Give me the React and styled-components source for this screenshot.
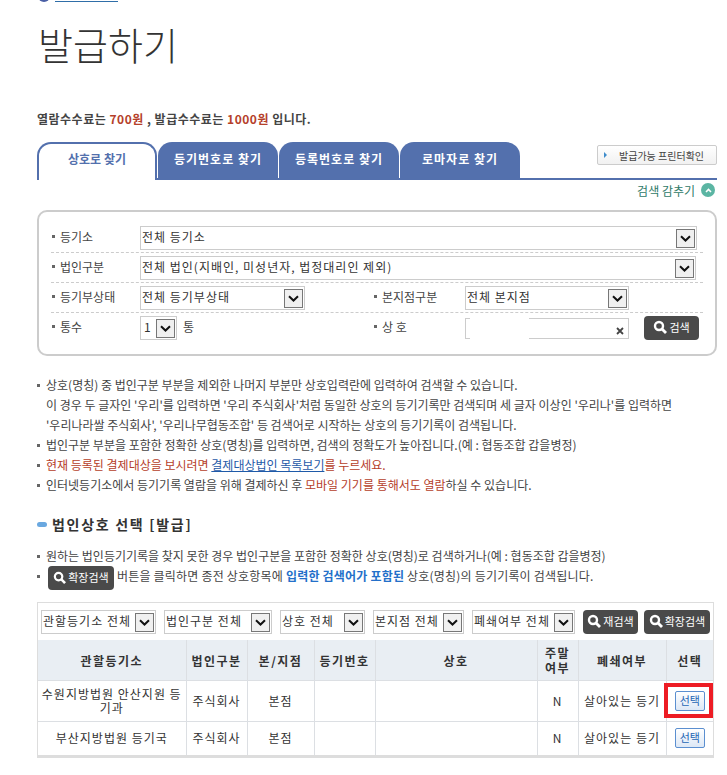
import React from "react";
import styled, { createGlobalStyle } from "styled-components";

const FONT = `"Noto Sans CJK KR", "Noto Sans", sans-serif`;

const GlobalStyle = createGlobalStyle`
  html, body {
    margin: 0;
    padding: 0;
    background: #fff;
  }
  body {
    font-family: ${FONT};
    font-size: 12px;
    color: #444;
  }
`;

const Chevron = () => (
  <svg width="11" height="7" viewBox="0 0 11 7">
    <path d="M1 1.2 L5.5 5.5 L10 1.2" fill="none" stroke="#111" strokeWidth="2" />
  </svg>
);

const SearchIcon = ({ size = 14 }) => (
  <svg width={size} height={size} viewBox="0 0 14 14">
    <circle cx="6" cy="6" r="4" fill="none" stroke="#fff" strokeWidth="2.4" />
    <path d="M9 9 L13 13" stroke="#fff" strokeWidth="2.8" />
  </svg>
);

const Select = ({ width, children, compact }) => (
  <SelectBox $width={width} $compact={compact}>
    <SelectText>{children}</SelectText>
    <SelectArrow>
      <Chevron />
    </SelectArrow>
  </SelectBox>
);

const App = () => (
  <Page>
    <GlobalStyle />
    <TopCrumb>
      <CrumbDot />
      <CrumbLine />
    </TopCrumb>
    <Title>발급하기</Title>
    <FeeNotice>
      열람수수료는 <Fee>700원</Fee> , 발급수수료는 <Fee>1000원</Fee> 입니다.
    </FeeNotice>

    <TabRow>
      <Tab $active>상호로 찾기</Tab>
      <Tab>등기번호로 찾기</Tab>
      <Tab>등록번호로 찾기</Tab>
      <Tab>로마자로 찾기</Tab>
      <PrinterButton>
        <PrinterMark />
        발급가능 프린터확인
      </PrinterButton>
    </TabRow>

    <HideRow>
      검색 감추기
      <HideIcon>
        <svg width="7" height="5" viewBox="0 0 7 5">
          <path d="M1 4 L3.5 1.5 L6 4" fill="none" stroke="#fff" strokeWidth="1.6" />
        </svg>
      </HideIcon>
    </HideRow>

    <SearchPanel>
      <FormRow>
        <Label>등기소</Label>
        <Select width="557px">전체 등기소</Select>
      </FormRow>
      <FormRow>
        <Label>법인구분</Label>
        <Select width="556px">전체 법인(지배인, 미성년자, 법정대리인 제외)</Select>
      </FormRow>
      <FormRow>
        <Label>등기부상태</Label>
        <Select width="165px">전체 등기부상태</Select>
        <SecondLabel>본지점구분</SecondLabel>
        <Select width="164px">전체 본지점</Select>
      </FormRow>
      <FormRow $last>
        <Label>통수</Label>
        <Select width="37px" compact>1</Select>
        <Unit>통</Unit>
        <SecondLabel $narrow>상 호</SecondLabel>
        <NameInput>
          <InputPatch />
          <ClearMark>
            <svg width="8" height="8" viewBox="0 0 8 8">
              <path d="M1 1 L7 7 M7 1 L1 7" fill="none" stroke="#444" strokeWidth="1.8" />
            </svg>
          </ClearMark>
        </NameInput>
        <DarkButton $width="55px" $left="15px">
          <SearchIcon />
          검색
        </DarkButton>
      </FormRow>
    </SearchPanel>

    <NoteList>
      <Note>
        상호(명칭) 중 법인구분 부분을 제외한 나머지 부분만 상호입력란에 입력하여 검색할 수 있습니다.
        <br />
        이 경우 두 글자인 '우리'를 입력하면 '우리 주식회사'처럼 동일한 상호의 등기기록만 검색되며 세 글자 이상인 '우리나'를 입력하면
        <br />
        '우리나라쌀 주식회사', '우리나무협동조합' 등 검색어로 시작하는 상호의 등기기록이 검색됩니다.
      </Note>
      <Note>법인구분 부분을 포함한 정확한 상호(명칭)를 입력하면, 검색의 정확도가 높아집니다.(예 : 협동조합 갑을병정)</Note>
      <Note>
        <Red>현재 등록된 결제대상을 보시려면 </Red>
        <BlueLink>결제대상법인 목록보기</BlueLink>
        <Red>를 누르세요.</Red>
      </Note>
      <Note>
        인터넷등기소에서 등기기록 열람을 위해 결제하신 후 <Red>모바일 기기를 통해서도 열람</Red>하실 수 있습니다.
      </Note>
    </NoteList>

    <SectionTitle>
      <SectionMark />
      법인상호 선택 [발급]
    </SectionTitle>

    <SubNotes>
      <Note>원하는 법인등기기록을 찾지 못한 경우 법인구분을 포함한 정확한 상호(명칭)로 검색하거나(예 : 협동조합 갑을병정)</Note>
      <Note $tall>
        <DarkButton $width="66px" $left="2px" $inline>
          <SearchIcon size={13} />
          확장검색
        </DarkButton>
        버튼을 클릭하면 종전 상호항목에 <BlueStrong>입력한 검색어가 포함된</BlueStrong> 상호(명칭)의 등기기록이 검색됩니다.
      </Note>
    </SubNotes>

    <ResultBox>
      <FilterBar>
        <Select width="115px">관할등기소 전체</Select>
        <Select width="108px">법인구분 전체</Select>
        <Select width="85px">상호 전체</Select>
        <Select width="91px">본지점 전체</Select>
        <Select width="103px">폐쇄여부 전체</Select>
        <DarkButton $width="55px">
          <SearchIcon />
          재검색
        </DarkButton>
        <DarkButton $width="66px" $left="-2px">
          <SearchIcon />
          확장검색
        </DarkButton>
      </FilterBar>
      <ResultTable>
        <colgroup>
          <col width="148" />
          <col width="61" />
          <col width="67" />
          <col width="61" />
          <col width="162" />
          <col width="41" />
          <col width="88" />
          <col width="47" />
        </colgroup>
        <thead>
          <tr>
            <Th>관할등기소</Th>
            <Th>법인구분</Th>
            <Th>본/지점</Th>
            <Th>등기번호</Th>
            <Th>상호</Th>
            <Th>
              주말
              <br />
              여부
            </Th>
            <Th>폐쇄여부</Th>
            <Th>선택</Th>
          </tr>
        </thead>
        <tbody>
          <RowA>
            <Td>수원지방법원 안산지원 등기과</Td>
            <Td>주식회사</Td>
            <Td>본점</Td>
            <Td />
            <Td />
            <Td>N</Td>
            <Td>살아있는 등기</Td>
            <Td $marked>
              <Highlight />
              <PickButton>선택</PickButton>
            </Td>
          </RowA>
          <RowB>
            <Td>부산지방법원 등기국</Td>
            <Td>주식회사</Td>
            <Td>본점</Td>
            <Td />
            <Td />
            <Td>N</Td>
            <Td>살아있는 등기</Td>
            <Td>
              <PickButton>선택</PickButton>
            </Td>
          </RowB>
        </tbody>
      </ResultTable>
    </ResultBox>
  </Page>
);

export default App;

const Page = styled.div`
  width: 727px;
  height: 775px;
  overflow: hidden;
  box-sizing: border-box;
  padding-left: 37px;
`;

const TopCrumb = styled.div`
  display: flex;
  align-items: flex-end;
  height: 2px;
  overflow: hidden;
  gap: 5px;
`;
const CrumbDot = styled.span`
  width: 12px;
  height: 12px;
  border-radius: 50%;
  background: #4a5fa5;
  margin-left: 1px;
`;
const CrumbLine = styled.span`
  width: 63px;
  height: 1px;
  background: #2f6ea8;
`;

const Title = styled.h1`
  margin: 19px 0 0 1px;
  font-size: 38px;
  line-height: 46px;
  font-weight: 300;
  color: #333;
`;

const FeeNotice = styled.p`
  margin: 42px 0 0;
  font-size: 12px;
  line-height: 20px;
  font-weight: 700;
  color: #444;
  letter-spacing: 0.5px;
`;
const Fee = styled.span`
  color: #b5402a;
`;

const TabRow = styled.div`
  display: flex;
  gap: 1px;
  width: 680px;
  height: 36px;
  margin-top: 13px;
  border-bottom: 2px solid #5370ad;
  position: relative;
`;
const Tab = styled.div`
  box-sizing: border-box;
  width: 120px;
  height: ${(p) => (p.$active ? "38px" : "36px")};
  padding-top: ${(p) => (p.$active ? "5px" : "7px")};
  text-align: center;
  font-size: 12px;
  line-height: 20px;
  font-weight: 700;
  letter-spacing: ${(p) => (p.$active ? "0" : "1px")};
  border-radius: 14px 14px 0 0;
  color: ${(p) => (p.$active ? "#5370ad" : "#fff")};
  background: ${(p) => (p.$active ? "#fff" : "#5370ad")};
  border: ${(p) => (p.$active ? "2px solid #5370ad" : "none")};
  border-bottom: none;
  z-index: 1;
`;
const PrinterButton = styled.div`
  position: absolute;
  right: 0;
  top: 3px;
  box-sizing: border-box;
  width: 120px;
  height: 20px;
  display: flex;
  align-items: center;
  border: 1px solid #ccc;
  border-radius: 2px;
  background: linear-gradient(#fff, #f1f1f1);
  font-size: 10px;
  color: #444;
  white-space: nowrap;
`;
const PrinterMark = styled.span`
  width: 0;
  height: 0;
  margin: 0 12px 0 6px;
  border-left: 3px solid #3f8ccb;
  border-top: 3px solid transparent;
  border-bottom: 3px solid transparent;
`;

const HideRow = styled.div`
  display: flex;
  justify-content: flex-end;
  align-items: center;
  gap: 6px;
  width: 678px;
  height: 20px;
  font-size: 12px;
  color: #2f7a68;
`;
const HideIcon = styled.span`
  display: flex;
  align-items: center;
  justify-content: center;
  width: 14px;
  height: 14px;
  border-radius: 50%;
  background: #5bb5a3;
`;

const SearchPanel = styled.div`
  box-sizing: border-box;
  width: 680px;
  height: 146px;
  margin-top: 10px;
  padding: 14px 12px 0;
  border: 2px solid #ccc;
  border-radius: 10px;
`;
const FormRow = styled.div`
  display: flex;
  align-items: flex-start;
  height: 26px;
  margin-bottom: 3px;
  border-bottom: ${(p) => (p.$last ? "none" : "1px dashed #ccc")};
`;
const Label = styled.div`
  display: flex;
  align-items: center;
  width: 89px;
  height: 21px;
  font-size: 12px;
  color: #444;
  &::before {
    content: "";
    width: 3px;
    height: 3px;
    margin: 0 5px 0 1px;
    background: #666;
  }
`;
const SecondLabel = styled(Label)`
  width: 91px;
  margin-left: ${(p) => (p.$narrow ? "0" : "69px")};
  &::before {
    margin-left: 0;
  }
`;
const Unit = styled.span`
  width: 191px;
  margin-left: 6px;
  line-height: 22px;
`;

const SelectBox = styled.div`
  box-sizing: border-box;
  flex: none;
  display: flex;
  justify-content: space-between;
  width: ${(p) => p.$width};
  height: 24px;
  padding: 0 0 0 ${(p) => (p.$compact ? "3px" : "1px")};
  border: 1px solid #ccc;
  font-size: 12px;
  line-height: 20px;
  letter-spacing: 1px;
  color: #333;
  background: #fff;
`;
const SelectText = styled.span`
  white-space: nowrap;
`;
const SelectArrow = styled.span`
  flex: none;
  box-sizing: border-box;
  display: flex;
  align-items: center;
  justify-content: center;
  width: 19px;
  height: 19px;
  margin: 2px 1px 0 0;
  border: 1px solid #777;
  background: #f0f0f0;
`;

const NameInput = styled.div`
  position: relative;
  box-sizing: border-box;
  width: 164px;
  height: 21px;
  margin-top: 2px;
  border: 1px solid #ccc;
`;
const InputPatch = styled.span`
  position: absolute;
  left: 4px;
  top: -1px;
  bottom: -1px;
  width: 59px;
  background: #fff;
`;
const ClearMark = styled.span`
  position: absolute;
  right: 4px;
  top: 8px;
  display: flex;
`;

const DarkButton = styled.div`
  box-sizing: border-box;
  flex: none;
  display: ${(p) => (p.$inline ? "inline-flex" : "flex")};
  align-items: center;
  justify-content: center;
  gap: 2px;
  width: ${(p) => p.$width};
  height: 24px;
  margin-left: ${(p) => p.$left || "0"};
  margin-right: ${(p) => (p.$inline ? "3px" : "0")};
  vertical-align: top;
  padding-bottom: 2px;
  background: #4a4a4a;
  border-radius: 4px;
  color: #fff;
  font-size: 11px;
  letter-spacing: 0;
  white-space: nowrap;
`;

const NoteList = styled.ul`
  list-style: none;
  margin: 19px 0 0;
  padding: 0;
`;
const SubNotes = styled(NoteList)`
  margin-top: 12px;
`;
const Note = styled.li`
  position: relative;
  padding-left: 9px;
  font-size: 12px;
  line-height: 20px;
  height: ${(p) => (p.$tall ? "24px" : "auto")};
  letter-spacing: ${(p) => (p.$tall ? "0.2px" : "0")};
  color: #444;
  white-space: nowrap;
  &::before {
    content: "";
    position: absolute;
    left: 0;
    top: 9px;
    width: 3px;
    height: 3px;
    background: #666;
  }
`;
const Red = styled.span`
  color: #b5402a;
`;
const BlueLink = styled.a`
  color: #1f5aa8;
  text-decoration: underline;
`;
const BlueStrong = styled.strong`
  color: #2470c9;
`;

const SectionTitle = styled.h2`
  display: flex;
  align-items: center;
  gap: 5px;
  margin: 19px 0 1px;
  font-size: 14px;
  line-height: 20px;
  font-weight: 700;
  color: #333;
  letter-spacing: 1.7px;
`;
const SectionMark = styled.span`
  width: 10px;
  height: 5px;
  border-radius: 3px;
  background: #6aa8e0;
`;

const ResultBox = styled.div`
  box-sizing: border-box;
  width: 677px;
  margin-top: 12px;
  border: 1px solid #ddd;
`;
const FilterBar = styled.div`
  display: flex;
  align-items: flex-start;
  gap: 8px;
  height: 37px;
  padding: 7px 0 0 3px;
  box-sizing: border-box;
`;
const ResultTable = styled.table`
  width: 100%;
  table-layout: fixed;
  border-collapse: collapse;
  border-bottom: 2px solid #ddd;
`;
const Th = styled.th`
  height: 40px;
  padding: 0;
  background: #e9eef3;
  border: 1px solid #dcdfe3;
  border-top: none;
  font-size: 12px;
  line-height: 15px;
  font-weight: 700;
  letter-spacing: 1.5px;
  color: #333;
  &:first-child { border-left: none; }
  &:last-child { border-right: none; }
`;
const Td = styled.td`
  position: ${(p) => (p.$marked ? "relative" : "static")};
  padding: 0;
  border: 1px solid #dcdfe3;
  text-align: center;
  font-size: 12px;
  line-height: 14px;
  letter-spacing: 1px;
  word-break: break-all;
  color: #333;
  &:first-child { border-left: none; }
  &:last-child { border-right: none; }
`;
const RowA = styled.tr`
  height: 41px;
`;
const RowB = styled.tr`
  height: 34px;
`;
const PickButton = styled.span`
  position: relative;
  box-sizing: border-box;
  display: inline-block;
  width: 30px;
  height: 20px;
  border: 1px solid #5b8fd0;
  border-radius: 2px;
  background: linear-gradient(#fff, #dde8f6);
  color: #2566b5;
  font-size: 11px;
  line-height: 17px;
  letter-spacing: 0;
  vertical-align: middle;
`;
const Highlight = styled.span`
  position: absolute;
  left: -3px;
  right: 0;
  top: 2px;
  bottom: 3px;
  border: 4px solid #ed1c24;
  box-sizing: border-box;
`;
